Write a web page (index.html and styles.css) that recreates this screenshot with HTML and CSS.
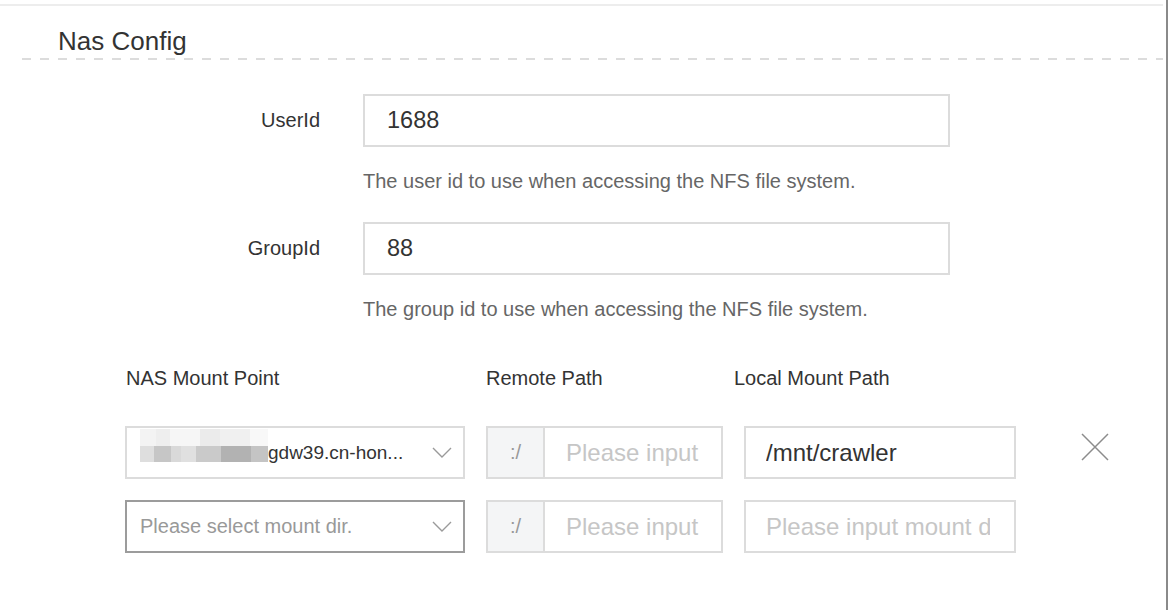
FILE: index.html
```html
<!DOCTYPE html>
<html lang="en">
<head>
    <meta charset="UTF-8">
    <title>Nas Config</title>
    <link rel="stylesheet" href="styles.css">
</head>
<body>
    <div class="page">
        <div class="section-header">
            <h2 class="section-title">Nas Config</h2>
        </div>
        <div class="dash-line"></div>

        <div class="form">
            <div class="form-row">
                <label class="form-label">UserId</label>
                <input class="text-input" type="text" value="1688">
            </div>
            <p class="form-help">The user id to use when accessing the NFS file system.</p>

            <div class="form-row">
                <label class="form-label">GroupId</label>
                <input class="text-input" type="text" value="88">
            </div>
            <p class="form-help">The group id to use when accessing the NFS file system.</p>
        </div>

        <div class="mounts">
            <div class="mount-grid mount-head">
                <span>NAS Mount Point</span>
                <span>Remote Path</span>
                <span class="local-head">Local Mount Path</span>
            </div>

            <div class="mount-grid">
                <div class="select">
                    <span class="masked">
                        <span class="px-row top">
                            <i style="background:#f3f3f3;width:16px"></i><i style="background:#eeeeee;width:14px"></i><i style="background:#f6f6f6;width:30px"></i><i style="background:#ebebeb;width:20px"></i><i style="background:#f0f0f0;width:30px"></i><i style="background:#f8f8f8;width:18px"></i>
                        </span>
                        <span class="px-row">
                            <i style="background:#dedede;width:14px"></i><i style="background:#c6c6c6;width:17px"></i><i style="background:#d9d9d9;width:10px"></i><i style="background:#e0e0e0;width:15px"></i><i style="background:#cacaca;width:25px"></i><i style="background:#b2b2b2;width:30px"></i><i style="background:#c4c4c4;width:17px"></i>
                        </span>
                    </span>
                    <span class="select-value">gdw39.cn-hon...</span>
                    <svg class="chevron" width="20" height="11" viewBox="0 0 20 11"><polyline points="1,1 10,10 19,1" fill="none" stroke="#9a9a9a" stroke-width="1.4"/></svg>
                </div>
                <div class="addon-group">
                    <span class="addon">:/</span>
                    <input class="path-input" type="text" placeholder="Please input">
                </div>
                <input class="path-input local" type="text" value="/mnt/crawler">
                <svg class="remove" width="28" height="28" viewBox="0 0 28 28"><path d="M1 1 L27 27 M27 1 L1 27" stroke="#8c8c8c" stroke-width="1.5" fill="none"/></svg>
            </div>

            <div class="mount-grid">
                <div class="select active">
                    <span class="select-placeholder">Please select mount dir.</span>
                    <svg class="chevron" width="20" height="11" viewBox="0 0 20 11"><polyline points="1,1 10,10 19,1" fill="none" stroke="#9a9a9a" stroke-width="1.4"/></svg>
                </div>
                <div class="addon-group">
                    <span class="addon">:/</span>
                    <input class="path-input" type="text" placeholder="Please input">
                </div>
                <input class="path-input local" type="text" placeholder="Please input mount dir">
            </div>
        </div>
    </div>
</body>
</html>
```

FILE: styles.css
```css
* {
    margin: 0;
    padding: 0;
    box-sizing: border-box;
    font-family: "Liberation Sans", Arial, sans-serif;
}

body {
    background: white;
    height: 610px;
    overflow: hidden;
    padding-right: 3px;
    border-right: 2px solid #8a8a8a;
    color: #333;
}

.page {
    margin-top: 4px;
    border-top: 2px solid #ededed;
}

.section-header {
    padding: 22px 0 4px 58px;
}

.section-title {
    font-size: 26px;
    font-weight: normal;
    line-height: 26px;
    color: #333;
}

.dash-line {
    margin-left: 22px;
    height: 2px;
    background: repeating-linear-gradient(to right, #dcdcdc 0 9px, transparent 9px 18px);
}

.form {
    padding-top: 34px;
}

.form-row {
    display: flex;
    align-items: center;
}

.form-label {
    width: 363px;
    padding-right: 43px;
    text-align: right;
    font-size: 20px;
    color: #333;
}

.text-input {
    width: 587px;
    height: 53px;
    border: 2px solid #dcdcdc;
    padding: 0 22px;
    font-size: 23.5px;
    color: #333;
    outline: none;
}

.form-help {
    margin: 24px 0 31px 363px;
    font-size: 20px;
    line-height: 20px;
    color: #666;
}

.form-help:last-child {
    margin-bottom: 0;
}

.mounts {
    margin-top: 48px;
    padding-left: 125px;
}

.mount-grid {
    display: grid;
    grid-template-columns: 340px 237px 272px 92px;
    column-gap: 21px;
    align-items: center;
    margin-bottom: 21px;
}

.mount-head {
    font-size: 20px;
    line-height: 22px;
    color: #333;
    margin-bottom: 37px;
}

.mount-head span:first-child {
    margin-left: 1px;
}

.local-head {
    margin-left: -10px;
}

.select {
    height: 53px;
    border: 2px solid #dcdcdc;
    display: flex;
    align-items: center;
    padding: 0 10px 0 13px;
    position: relative;
}

.select.active {
    border-color: #9c9c9c;
}

.masked {
    display: flex;
    flex-direction: column;
    width: 128px;
    margin-top: -14px;
}

.px-row {
    display: flex;
    height: 16px;
}

.px-row.top {
    height: 17px;
}

.px-row i {
    display: block;
    height: 100%;
}

.select-value {
    font-size: 19px;
    color: #333;
    flex: 1;
}

.select-placeholder {
    font-size: 20px;
    color: #999;
    flex: 1;
}

.chevron {
    margin-right: 1px;
}

.addon-group {
    display: flex;
    height: 53px;
}

.addon {
    width: 57px;
    background: #f4f5f6;
    border: 2px solid #dcdcdc;
    border-right: none;
    display: flex;
    align-items: center;
    justify-content: center;
    font-size: 20px;
    color: #999;
}

.path-input {
    flex: 1;
    min-width: 0;
    height: 53px;
    border: 2px solid #dcdcdc;
    padding: 0 18px 0 21px;
    font-size: 24px;
    color: #333;
    outline: none;
}

.path-input.local {
    width: 272px;
    padding: 0 24px 0 20px;
}

.path-input::placeholder {
    color: #c6c6c6;
}

.remove {
    margin-left: 44px;
    margin-top: -12px;
}
```
